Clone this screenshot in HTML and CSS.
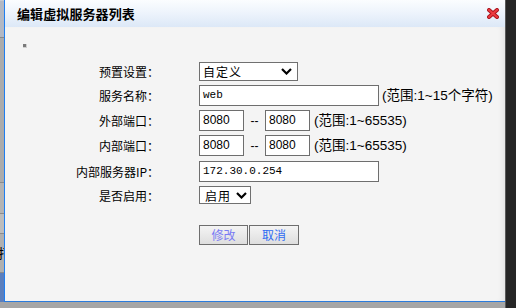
FILE: index.html
```html
<!DOCTYPE html>
<html lang="zh">
<head>
<meta charset="utf-8">
<title>编辑虚拟服务器列表</title>
<link rel="stylesheet" href="styles.css">
</head>
<body>
<div class="screen">
  <div class="main">
    <div class="strip">
      <div class="seg seg-top"></div>
      <div class="seg seg-a"></div>
      <div class="seg seg-b"></div>
      <div class="seg seg-c"></div>
      <div class="seg seg-d"><span class="cut">打</span></div>
      <div class="seg seg-blue"></div>
    </div>
    <div class="dialog">
      <div class="dlg-head">
        <span class="title">编辑虚拟服务器列表</span>
        <svg class="close" width="12" height="11" viewBox="0 0 12 11">
          <path d="M2 2 L10 9 M10 2 L2 9" stroke="#a8141c" stroke-width="4" stroke-linecap="round"/>
          <path d="M2 2 L10 9 M10 2 L2 9" stroke="#ec3a40" stroke-width="2.2" stroke-linecap="round"/>
        </svg>
      </div>
      <div class="dlg-body">
        <div class="tiny"></div>
        <div class="form">
          <div class="lbl">预置设置：</div>
          <div class="ctrl">
            <div class="sel sel-wide"><span>自定义</span>
              <svg class="chev" width="11" height="7" viewBox="0 0 11 7"><polyline points="1,1 5.5,5.5 10,1" fill="none" stroke="#000" stroke-width="2.2"/></svg>
            </div>
          </div>

          <div class="lbl">服务名称：</div>
          <div class="ctrl">
            <div class="inp inp-long mono">web</div>
            <span class="hint hint-name">(范围:1~15个字符)</span>
          </div>

          <div class="lbl">外部端口：</div>
          <div class="ctrl">
            <div class="inp inp-port">8080</div>
            <span class="dash">--</span>
            <div class="inp inp-port">8080</div>
            <span class="hint">(范围:1~65535)</span>
          </div>

          <div class="lbl">内部端口：</div>
          <div class="ctrl">
            <div class="inp inp-port">8080</div>
            <span class="dash">--</span>
            <div class="inp inp-port">8080</div>
            <span class="hint">(范围:1~65535)</span>
          </div>

          <div class="lbl lbl-ip">内部服务器IP：</div>
          <div class="ctrl ctrl-ip">
            <div class="inp inp-long mono">172.30.0.254</div>
          </div>

          <div class="lbl">是否启用：</div>
          <div class="ctrl">
            <div class="sel sel-small"><span>启用</span>
              <svg class="chev" width="11" height="7" viewBox="0 0 11 7"><polyline points="1,1 5.5,5.5 10,1" fill="none" stroke="#000" stroke-width="2.2"/></svg>
            </div>
          </div>

          <div class="lbl"></div>
          <div class="ctrl ctrl-btns">
            <div class="btn btn-edit">修改</div>
            <div class="btn btn-cancel">取消</div>
          </div>
        </div>
      </div>
    </div>
  </div>
  <div class="bottom"></div>
</div>
</body>
</html>
```
FILE: styles.css
```css
html, body {
  margin: 0;
  padding: 0;
}
body {
  width: 516px;
  height: 308px;
  overflow: hidden;
  background: #262626;
  font-family: "Noto Sans CJK SC", "Liberation Sans", sans-serif;
  font-size: 12px;
  color: #000;
}
.screen {
  width: 506px;
  height: 308px;
  display: flex;
  flex-direction: column;
  border-right: 1px solid #5a5a5a;
  box-sizing: border-box;
}
.main {
  display: flex;
  height: 302px;
}
.strip {
  width: 4px;
  display: flex;
  flex-direction: column;
  background: #aaaaaa;
}
.seg { flex: none; box-sizing: border-box; overflow: hidden; }
.seg-top { height: 38px; background: #b2b8c4; border-bottom: 1px solid #888; border-top: 1px solid #c4c8d0; }
.seg-a { height: 145px; background: #acacac; border-bottom: 1px solid #8c8c8c; }
.seg-b { height: 31px; background: #b4b4b4; border-bottom: 1px solid #8c8c8c; }
.seg-c { height: 20px; background: #bdbdbd; border-bottom: 1px solid #8c8c8c; }
.seg-d { height: 39px; background: #b0b0b0; border-bottom: 1px solid #8c8c8c; }
.seg-blue { flex: 1; background: #5b7fbe; }
.cut {
  display: block;
  margin-top: 12px;
  margin-left: -2px;
  font-size: 13px;
  line-height: 14px;
  color: #000;
}
.dialog {
  width: 501px;
  box-sizing: border-box;
  border-left: 1px solid #1f7ef0;
  border-bottom: 1px solid #2a7bdc;
  display: flex;
  flex-direction: column;
  background: #f4f4f4;
}
.dlg-head {
  height: 27px;
  flex: none;
  display: flex;
  align-items: center;
  justify-content: space-between;
  padding: 0 6px 0 12px;
  background: linear-gradient(#fbfdff 0%, #eef4fc 45%, #dce8f7 100%);
}
.title {
  font-size: 13px;
  font-weight: bold;
  letter-spacing: 0.1px;
  margin-top: -1px;
}
.close {
  margin-top: -1px;
}
.dlg-body {
  flex: 1;
  box-shadow: inset -6px 0 6px -4px rgba(0, 0, 0, 0.08);
}
.tiny {
  width: 3px;
  height: 3px;
  margin: 17px 0 0 18px;
  background: #7a7a7a;
  border-right: 1px solid #cfcfcf;
  border-bottom: 1px solid #cfcfcf;
}
.form {
  margin-top: 14px;
  display: grid;
  grid-template-columns: 154px auto;
  column-gap: 40px;
  row-gap: 4px;
  align-items: center;
}
.lbl {
  text-align: right;
  font-size: 12px;
  line-height: 16px;
  margin-top: 1px;
}
.ctrl {
  display: flex;
  align-items: center;
}
.ctrl-ip { margin-top: 1px; }
.sel {
  box-sizing: border-box;
  display: flex;
  align-items: center;
  justify-content: space-between;
  background: #fff;
  border: 1px solid #707070;
  font-size: 12px;
}
.sel-wide {
  width: 99px;
  height: 19px;
  padding: 0 5px 0 3px;
  letter-spacing: 1px;
}
.sel-small {
  width: 52px;
  height: 18px;
  padding: 0 3px 0 5px;
  letter-spacing: 1px;
}
.chev { display: block; }
.inp {
  box-sizing: border-box;
  height: 21px;
  background: #fff;
  border: 1px solid #6e6e6e;
  padding: 0 3px;
  line-height: 19px;
  font-family: "Liberation Sans", sans-serif;
  font-size: 12px;
  color: #000;
}
.mono {
  font-family: "Liberation Mono", monospace;
  font-size: 11px;
}
.inp-long { width: 180px; }
.inp-port { width: 45px; }
.dash {
  width: 21px;
  text-align: center;
  font-family: "Liberation Sans", sans-serif;
  font-size: 12px;
}
.hint {
  margin-left: 4px;
  font-family: "Liberation Sans", "Noto Sans CJK SC", sans-serif;
  font-size: 13.5px;
  line-height: 18px;
}
.hint-name { margin-left: 3px; }
.ctrl-btns {
  margin-top: 17px;
  gap: 1px;
}
.btn {
  box-sizing: border-box;
  width: 49px;
  height: 20px;
  border: 1px solid #6e6e6e;
  background: linear-gradient(#f4f4f4, #dedede);
  text-align: center;
  line-height: 18px;
  font-size: 12px;
}
.btn-edit { color: #7a7cf4; }
.btn-cancel { color: #2f6cf2; width: 50px; }
.bottom {
  height: 6px;
  background: #a6a6a6;
}
```
